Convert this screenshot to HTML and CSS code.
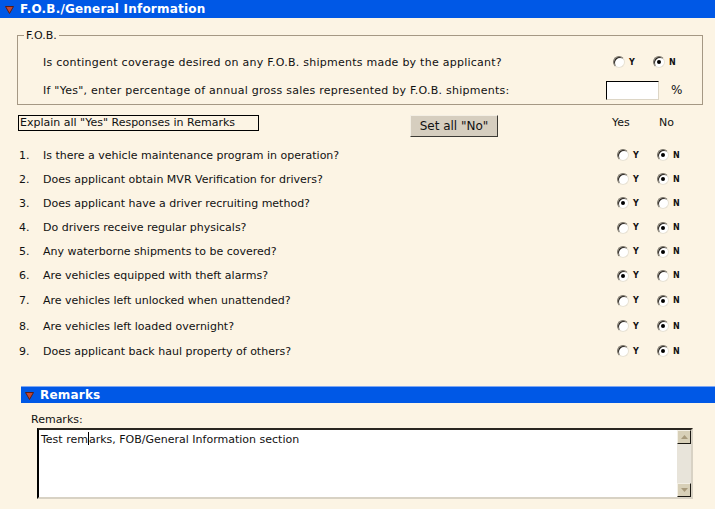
FILE: index.html
```html
<!DOCTYPE html>
<html lang="en">
<head>
  <meta charset="UTF-8" />
  <title>F.O.B./General Information</title>
  <link rel="stylesheet" href="styles.css">
</head>
<body>
  <div class="bar">
    <svg class="tri" width="9" height="9" viewBox="0 0 9 9"><path d="M0.5 1.5 L8.5 1.5 L4.5 8.5 Z" fill="#c04838" stroke="#5a1c14" stroke-width="1"/></svg>
    F.O.B./General Information
  </div>

  <fieldset class="fob">
    <legend>F.O.B.</legend>
    <div class="frow">
      <span class="ftext">Is contingent coverage desired on any F.O.B. shipments made by the applicant?</span>
      <span class="yn"><i class="radio"></i><b>Y</b><i class="radio on"></i><b>N</b></span>
    </div>
    <div class="frow">
      <span class="ftext">If "Yes", enter percentage of annual gross sales represented by F.O.B. shipments:</span>
      <span class="pct"><span class="box"></span>%</span>
    </div>
  </fieldset>

  <div class="tools">
    <span class="explain">Explain all "Yes" Responses in Remarks</span>
    <span class="btn">Set all "No"</span>
    <span class="heads"><span>Yes</span><span>No</span></span>
  </div>

  <div class="questions">
    <div class="q h24"><span class="num">1.</span><span class="qt">Is there a vehicle maintenance program in operation?</span><span class="yn"><i class="radio"></i><b>Y</b><i class="radio on"></i><b>N</b></span></div>
    <div class="q h24"><span class="num">2.</span><span class="qt">Does applicant obtain MVR Verification for drivers?</span><span class="yn"><i class="radio"></i><b>Y</b><i class="radio on"></i><b>N</b></span></div>
    <div class="q h24"><span class="num">3.</span><span class="qt">Does applicant have a driver recruiting method?</span><span class="yn"><i class="radio on"></i><b>Y</b><i class="radio"></i><b>N</b></span></div>
    <div class="q h25"><span class="num">4.</span><span class="qt">Do drivers receive regular physicals?</span><span class="yn"><i class="radio"></i><b>Y</b><i class="radio on"></i><b>N</b></span></div>
    <div class="q h23"><span class="num">5.</span><span class="qt">Any waterborne shipments to be covered?</span><span class="yn"><i class="radio"></i><b>Y</b><i class="radio on"></i><b>N</b></span></div>
    <div class="q h25"><span class="num">6.</span><span class="qt">Are vehicles equipped with theft alarms?</span><span class="yn"><i class="radio on"></i><b>Y</b><i class="radio"></i><b>N</b></span></div>
    <div class="q h25"><span class="num">7.</span><span class="qt">Are vehicles left unlocked when unattended?</span><span class="yn"><i class="radio"></i><b>Y</b><i class="radio on"></i><b>N</b></span></div>
    <div class="q h26"><span class="num">8.</span><span class="qt">Are vehicles left loaded overnight?</span><span class="yn"><i class="radio"></i><b>Y</b><i class="radio on"></i><b>N</b></span></div>
    <div class="q h24"><span class="num">9.</span><span class="qt">Does applicant back haul property of others?</span><span class="yn"><i class="radio"></i><b>Y</b><i class="radio on"></i><b>N</b></span></div>
  </div>

  <div class="remarks">
    <div class="bar sub">
      <svg class="tri" width="9" height="9" viewBox="0 0 9 9"><path d="M0.5 1.5 L8.5 1.5 L4.5 8.5 Z" fill="#c04838" stroke="#5a1c14" stroke-width="1"/></svg>
      Remarks
    </div>
    <div class="rlabel">Remarks:</div>
    <div class="area">
      <div class="atext">Test rem<span class="caret"></span>arks, FOB/General Information section</div>
      <div class="scroll">
        <span class="sbtn"><svg width="7" height="4" viewBox="0 0 7 4"><path d="M0 4 L3.5 0 L7 4 Z" fill="#a89a7c"/></svg></span>
        <span class="strack"></span>
        <span class="sbtn"><svg width="7" height="4" viewBox="0 0 7 4"><path d="M0 0 L3.5 4 L7 0 Z" fill="#a89a7c"/></svg></span>
      </div>
    </div>
  </div>
</body>
</html>
```

FILE: styles.css
```css
body {
  margin: 0;
  background: #fcf4e4;
  font-family: "DejaVu Sans", Verdana, sans-serif;
  font-size: 11px;
  color: #111;
}
.bar {
  display: flex;
  align-items: center;
  gap: 6px;
  height: 18px;
  padding-left: 5px;
  background: #0058e6;
  color: white;
  font-weight: bold;
  font-size: 12px;
  letter-spacing: 0.2px;
}
.tri {
  flex: none;
}
.fob {
  margin: 11px 12px 0 17px;
  padding: 6px 0 0 0;
  height: 68px;
  border: 1px solid #a59884;
}
.fob legend {
  padding: 0 2px;
  margin-left: 6px;
}
.frow {
  display: flex;
  align-items: center;
  height: 28px;
  padding-left: 25px;
}
.ftext {
  flex: 1;
  letter-spacing: 0.25px;
}
.yn {
  display: flex;
  align-items: center;
  flex: none;
}
.yn b {
  font-size: 8px;
  font-weight: bold;
  margin-left: 4px;
  width: 24px;
}
.yn b:last-child {
  width: 8px;
}
.fob .yn {
  margin-right: 25px;
}
.radio {
  flex: none;
  display: inline-block;
  width: 10px;
  height: 10px;
  border-radius: 50%;
  background: white;
  border: 1px solid #7a7468;
  border-right-color: #e8e2d4;
  border-bottom-color: #e8e2d4;
  box-shadow: inset 1px 1px 0 #2a2620;
  position: relative;
}
.radio.on::after {
  content: "";
  position: absolute;
  left: 3px;
  top: 3px;
  width: 4px;
  height: 4px;
  border-radius: 50%;
  background: #000;
}
.pct {
  display: flex;
  align-items: center;
  gap: 12px;
  width: 96px;
  font-size: 12px;
}
.box {
  width: 51px;
  height: 17px;
  background: white;
  border: 1px solid #ddd6c6;
  border-top-color: #000;
  border-left-color: #000;
}
.tools {
  display: flex;
  align-items: flex-start;
  margin: 10px 0 0 18px;
  height: 28px;
}
.explain {
  width: 238px;
  height: 14px;
  line-height: 14px;
  border: 1px solid #000;
  padding-left: 1px;
}
.btn {
  margin-left: 151px;
  width: 86px;
  height: 20px;
  line-height: 20px;
  text-align: center;
  font-size: 12px;
  background: #d6cebf;
  border: 1px solid #f4efe4;
  border-right-color: #3c3a34;
  border-bottom-color: #3c3a34;
}
.heads {
  display: flex;
  margin-left: 114px;
  margin-top: 1px;
  font-size: 11px;
}
.heads span:first-child {
  width: 47px;
}
.questions {
  padding-left: 19px;
}
.q {
  display: flex;
  align-items: center;
}
.h23 { height: 23px; }
.h24 { height: 24px; }
.h25 { height: 25px; }
.h26 { height: 26px; }
.num {
  width: 24px;
}
.qt {
  flex: 1;
}
.q .yn {
  margin-right: 34px;
}
.remarks {
  margin: 23px 0 0 21px;
}
.sub {
  height: 16px;
  border-top: 1px solid #7ea6f0;
  padding-left: 4px;
  gap: 6px;
}
.rlabel {
  margin: 10px 0 0 10px;
}
.area {
  display: flex;
  margin: 2px 0 0 16px;
  width: 652px;
  height: 67px;
  background: white;
  border: 2px solid #000;
  border-top-color: #2a2620;
  border-right: 2px solid #d8d2c4;
  border-bottom: 2px solid #d8d2c4;
}
.atext {
  flex: 1;
  padding: 2px 2px;
  font-size: 11px;
}
.caret {
  display: inline-block;
  width: 1px;
  height: 13px;
  background: #000;
  vertical-align: -2px;
}
.scroll {
  display: flex;
  flex-direction: column;
  width: 14px;
  background: #e8e4da;
}
.sbtn {
  display: flex;
  align-items: center;
  justify-content: center;
  height: 12px;
  background: #d8d0b8;
  border: 1px solid #f4f0e6;
  border-right-color: #1a1812;
  border-bottom-color: #1a1812;
}
.strack {
  flex: 1;
}
```
